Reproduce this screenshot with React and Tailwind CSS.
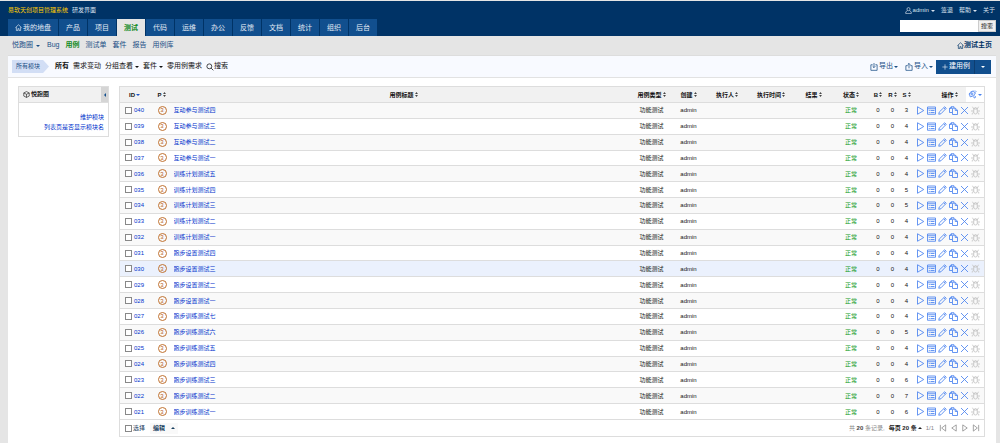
import React, { useState } from 'react';

const navItems = ['产品', '项目', '测试', '代码', '运维', '办公', '反馈', '文档', '统计', '组织', '后台'];
const subItems = ['Bug', '用例', '测试单', '套件', '报告', '用例库'];

const cases = [
    { id: '040', title: '互动参与测试四', steps: 3 },
    { id: '039', title: '互动参与测试三', steps: 4 },
    { id: '038', title: '互动参与测试二', steps: 4 },
    { id: '037', title: '互动参与测试一', steps: 4 },
    { id: '036', title: '训练计划测试五', steps: 4 },
    { id: '035', title: '训练计划测试四', steps: 5 },
    { id: '034', title: '训练计划测试三', steps: 5 },
    { id: '033', title: '训练计划测试二', steps: 4 },
    { id: '032', title: '训练计划测试一', steps: 4 },
    { id: '031', title: '跑步设置测试四', steps: 4 },
    { id: '030', title: '跑步设置测试三', steps: 4, active: true },
    { id: '029', title: '跑步设置测试二', steps: 4 },
    { id: '028', title: '跑步设置测试一', steps: 4 },
    { id: '027', title: '跑步训练测试七', steps: 4 },
    { id: '026', title: '跑步训练测试六', steps: 5 },
    { id: '025', title: '跑步训练测试五', steps: 4 },
    { id: '024', title: '跑步训练测试四', steps: 4 },
    { id: '023', title: '跑步训练测试三', steps: 6 },
    { id: '022', title: '跑步训练测试二', steps: 7 },
    { id: '021', title: '跑步训练测试一', steps: 6 },
];

const Icon = ({ children, className = 'size-[9px]' }) => (
    <svg
        viewBox="0 0 18 18"
        className={`${className} shrink-0`}
        fill="none"
        stroke="currentColor"
        strokeWidth="1.7"
        aria-hidden="true"
    >
        {children}
    </svg>
);

const HomeIcon = () => (
    <Icon className="size-[7px]">
        <path d="M1 9.5 9 2l8 7.5M3.5 8v9h4v-5h3v5h4V8" />
    </Icon>
);

const Caret = ({ up = false }) => (
    <svg viewBox="0 0 8 4" className="w-1 h-[2px] shrink-0" fill="currentColor" aria-hidden="true">
        <path d={up ? 'M0 4 4 0l4 4z' : 'M0 0h8L4 4z'} />
    </svg>
);

const SortIcon = () => (
    <svg viewBox="0 0 8 14" className="w-[3px] h-[5px] shrink-0 text-[#444]" fill="currentColor" aria-hidden="true">
        <path d="M0 5.500 4 0l4 5.500zM0 8.500h8L4 14z" />
    </svg>
);

const actions = [
    { label: '执行', icon: <path d="M3 1.5v15L15.5 9z" /> },
    { label: '结果', icon: <path d="M1 2h16v14.5H1zM1 5.5h16M3.5 9h2M7 9h8M3.5 13h2M7 13h8" /> },
    { label: '编辑', icon: <path d="m1.500 16.500 1-4.500L13.500 1.500l3 3L6 15.500zM11.500 3.500l3 3" /> },
    { label: '复制', icon: <path d="M6 13H1V4.500L4.500 1.500H10V4M1 5h4V1.500M7 4.500h6l4 4v8.500H7zM12.500 4.500V9H17" /> },
    { label: '删除', icon: <path d="m2 2 14 14M16 2 2 16" /> },
    {
        label: '提Bug',
        disabled: true,
        icon: <path d="M5.500 6h7v6.500a3.500 3.500 0 0 1-7 0zM5.500 6 3 1.500M12.500 6 15 1.500M6.500 6a2.500 3 0 0 1 5 0M5.500 10H0M12.500 10H18M5.500 13l-3 1.500V17M12.500 13l3 1.500V17" />,
    },
];

const HeadCell = ({ children, align = 'justify-center', colSpan }) => (
    <th colSpan={colSpan} className="p-0 font-bold">
        <button className={`flex w-full items-center gap-px whitespace-nowrap ${align}`}>
            {children}
            <SortIcon />
        </button>
    </th>
);

const Checkbox = ({ label, checked, onChange, id }) => (
    <input
        type="checkbox"
        id={id}
        aria-label={label}
        checked={checked}
        onChange={onChange}
        className="size-[7px] shrink-0 appearance-none border border-[#888] bg-white checked:bg-[#1a53c8]"
    />
);

const Header = () => (
    <header className="flex justify-between border-t border-[#e5e5e5] bg-[#003366] pl-2 text-white">
        <div>
            <div className="flex h-[18px] items-center gap-1 text-[6px]">
                <span className="text-[#ffcc00]">易软天创项目管理系统</span>
                <span className="text-[#d8e2ee]">研发界面</span>
            </div>
            <nav className="flex gap-px text-[7px] leading-[17px] whitespace-nowrap">
                <a href="#my" className="flex items-center gap-px bg-[#114f8e] px-[7px] text-[#e2ebf5]">
                    <HomeIcon />
                    我的地盘
                </a>
                {navItems.map((item) => (
                    <a
                        key={item}
                        href={`#${item}`}
                        className={
                            item === '测试'
                                ? 'bg-[#e5e5e5] px-[7px] font-bold text-[#118a1c]'
                                : 'bg-[#114f8e] px-[7px] text-[#e2ebf5]'
                        }
                    >
                        {item}
                    </a>
                ))}
            </nav>
        </div>
        <div className="flex flex-col items-end">
            <div className="flex h-[19px] items-center gap-[6px] pr-[5px] text-[6px] text-[#d8e2ee]">
                <button className="flex items-center gap-px">
                    <Icon className="size-[7px]">
                        <circle cx="9" cy="5.500" r="4" />
                        <path d="M6.500 9 2 12.500V17h14v-4.500L11.500 9" />
                    </Icon>
                    <span className="mr-px">admin</span>
                    <Caret />
                </button>
                <a href="#logout">签退</a>
                <button className="flex items-center gap-[2px]">
                    帮助
                    <Caret />
                </button>
                <a href="#about">关于</a>
            </div>
            <form className="mr-1 flex h-3" onSubmit={(e) => e.preventDefault()}>
                <input type="text" aria-label="搜索内容" className="w-[78px] bg-white px-1 text-[6px] text-black outline-none" />
                <button className="w-[18px] border border-[#ccc] bg-[#efefef] text-[6px] leading-[10px] text-[#222]">搜索</button>
            </form>
        </div>
    </header>
);

const SubNav = () => (
    <div className="flex h-[19px] items-center justify-between pr-2 pl-3 text-[7px] text-[#1a4f85]">
        <nav className="flex items-center gap-[6px] whitespace-nowrap">
            <button className="mr-px flex items-center gap-[3px]">
                悦跑圈
                <Caret />
            </button>
            {subItems.map((item) => (
                <a key={item} href={`#${item}`} className={item === '用例' ? 'font-bold text-[#118a1c]' : ''}>
                    {item}
                </a>
            ))}
        </nav>
        <a href="#qa" className="flex items-center font-bold text-[#003366]">
            <HomeIcon />
            测试主页
        </a>
    </div>
);

const Toolbar = () => (
    <div className="flex h-[22px] items-center justify-between border-b border-[#e2e2e2] bg-[#f8faff] pr-[5px] pl-1 text-[7px] text-[#111]">
        <div className="flex items-center gap-1 whitespace-nowrap">
            <a
                href="#all"
                className="flex h-[13px] w-[37px] items-center bg-[#d2def5] pl-1 text-[6px] text-[#1a4f85] [clip-path:polygon(0_0,84%_0,100%_50%,84%_100%,0_100%)]"
            >
                所有模块
            </a>
            <a href="#total" className="ml-[2px] font-bold">所有</a>
            <a href="#changed">需求变动</a>
            <button className="flex items-center gap-[2px]">
                分组查看
                <Caret />
            </button>
            <button className="flex items-center gap-[2px]">
                套件
                <Caret />
            </button>
            <a href="#zero">零用例需求</a>
            <button className="flex items-center">
                <Icon className="size-[8px]">
                    <circle cx="7.500" cy="7.500" r="5.500" />
                    <path d="m11.500 11.500 5 5" />
                </Icon>
                搜索
            </button>
        </div>
        <div className="flex items-center gap-[3px] whitespace-nowrap text-[#1a4f85]">
            <button className="mr-1 flex items-center gap-px">
                <Icon className="size-[8px]">
                    <path d="M6 4H2v12.500h14V4h-4M9 0v10M6 7.500l3 3 3-3" />
                </Icon>
                导出
                <Caret />
            </button>
            <button className="flex items-center gap-px">
                <Icon className="size-[8px]">
                    <path d="M6 6H2v10.500h14V6h-4M9 12V1M6 4l3-3 3 3" />
                </Icon>
                导入
                <Caret />
            </button>
            <div className="flex h-[14px] bg-[#114f8e] text-white">
                <button className="flex items-center gap-px border-r border-[#0d3d70] pr-1 pl-[6px]">
                    <Icon className="size-[6px]">
                        <path d="M9 1v16M1 9h16" />
                    </Icon>
                    建用例
                </button>
                <button aria-label="更多" className="flex w-4 items-center justify-center">
                    <Caret />
                </button>
            </div>
        </div>
    </div>
);

const Sidebar = () => (
    <aside className="w-[91px] shrink-0 self-start border border-[#ddd] bg-white text-[6px]">
        <div className="flex h-[15px] items-center justify-between bg-[#f1f1f1] pl-1 text-[#222]">
            <div className="flex items-center gap-px font-bold">
                <Icon className="size-[7px]">
                    <path d="M9 1.500 16 5v8l-7 3.500L2 13V5zM2 5l7 3.500L16 5M9 8.500v8" />
                </Icon>
                悦跑圈
            </div>
            <button aria-label="收起" className="flex h-full w-[7px] items-center justify-center bg-[#d5d5d5] text-[#114f8e]">
                <svg viewBox="0 0 4 8" className="h-[4px] w-[2px]" fill="currentColor" aria-hidden="true">
                    <path d="M4 0v8L0 4z" />
                </svg>
            </button>
        </div>
        <div className="flex flex-col items-end border-t border-[#ddd] pt-[9px] pr-1 pb-1 leading-[10px] text-[#0033cc]">
            <a href="#modules">维护模块</a>
            <a href="#show">列表页是否显示模块名</a>
        </div>
    </aside>
);

const CaseTable = ({ selected, onToggle }) => (
    <table className="h-full w-full table-fixed border-collapse border border-[#ddd] text-left text-[6px] leading-[10px] text-[#111]">
        <colgroup>
            <col className="w-[34px]" />
            <col className="w-[20px]" />
            <col />
            <col className="w-[36px]" />
            <col className="w-[38px]" />
            <col className="w-[39px]" />
            <col className="w-[49px]" />
            <col className="w-[36px]" />
            <col className="w-[39px]" />
            <col className="w-[15px]" />
            <col className="w-[14px]" />
            <col className="w-[14px]" />
            <col className="w-[52px]" />
            <col className="w-[19px]" />
        </colgroup>
        <thead>
            <tr className="h-4 bg-[#f1f1f1]">
                <th className="p-0 pl-[9px] font-bold">
                    <button className="flex items-center gap-px">
                        ID
                        <span className="flex text-[#1a53c8]"><Caret /></span>
                    </button>
                </th>
                <HeadCell align="justify-start pl-1">P</HeadCell>
                <HeadCell>用例标题</HeadCell>
                <HeadCell>用例类型</HeadCell>
                <HeadCell>创建</HeadCell>
                <HeadCell>执行人</HeadCell>
                <HeadCell>执行时间</HeadCell>
                <HeadCell>结果</HeadCell>
                <HeadCell>状态</HeadCell>
                <HeadCell>B</HeadCell>
                <HeadCell>R</HeadCell>
                <HeadCell>S</HeadCell>
                <HeadCell align="justify-end pr-2">操作</HeadCell>
                <th className="bg-white p-0">
                    <button aria-label="自定义" className="flex w-full items-center justify-center gap-px text-[#4a83f0]">
                        <Icon className="size-[9px]">
                            <path d="m6 3 2 1 1-2 3 .5.500 2.500 2 1-1 2.500L12 10l-1 2.500L8 12l-2 2-2.500-1.500.5-2.500-2-1.500 1.500-2.500L6 6z" />
                            <circle cx="8" cy="8" r="2" />
                            <path d="M14 1l2 2-1 2M13 12l2 1-1 3-3-1" />
                        </Icon>
                        <Caret />
                    </button>
                </th>
            </tr>
        </thead>
        <tbody>
            {cases.map((item) => (
                <tr
                    key={item.id}
                    className={`border-t border-[#ddd] ${item.active ? 'bg-[#ebf1fd]' : 'odd:bg-[#f9f9f9] even:bg-white'}`}
                >
                    <td className="p-0 pl-[5px]">
                        <div className="flex items-center gap-[2px] text-[#0033cc]">
                            <Checkbox
                                label={`选择 ${item.id}`}
                                checked={selected.includes(item.id)}
                                onChange={() => onToggle(item.id)}
                            />
                            <a href={`#case-${item.id}`}>{item.id}</a>
                        </div>
                    </td>
                    <td className="p-0 pl-1">
                        <span className="flex size-[9px] items-center justify-center rounded-full border border-[#c0712f] text-[6px] leading-none text-[#b8621b]">
                            3
                        </span>
                    </td>
                    <td className="truncate p-0 text-[#0033cc]">
                        <a href={`#case-${item.id}`}>{item.title}</a>
                    </td>
                    <td className="p-0 text-center whitespace-nowrap">功能测试</td>
                    <td className="p-0 text-center">admin</td>
                    <td className="p-0"></td>
                    <td className="p-0"></td>
                    <td className="p-0"></td>
                    <td className="p-0 text-center text-[#119a1c]">正常</td>
                    <td className="p-0 text-center">0</td>
                    <td className="p-0 text-center">0</td>
                    <td className="p-0 text-center">{item.steps}</td>
                    <td colSpan={2} className="p-0">
                        <div className="flex gap-[2px] pl-[2px]">
                            {actions.map((action) => (
                                <button
                                    key={action.label}
                                    aria-label={action.label}
                                    disabled={action.disabled}
                                    className="text-[#4a83f0] disabled:text-[#c4c4c4]"
                                >
                                    <Icon>{action.icon}</Icon>
                                </button>
                            ))}
                        </div>
                    </td>
                </tr>
            ))}
        </tbody>
    </table>
);

const TableFooter = ({ allSelected, onToggleAll }) => (
    <div className="flex h-[17px] shrink-0 items-center justify-between border border-t-0 border-[#ddd] pr-1 pl-[5px] text-[6px] text-[#888]">
        <div className="flex items-center gap-[5px] text-[#1a4060]">
            <div className="flex items-center gap-px">
                <Checkbox id="select-all" checked={allSelected} onChange={onToggleAll} />
                <label htmlFor="select-all">选择</label>
            </div>
            <button className="flex h-[11px] items-center gap-[6px] bg-[#f9f9f9] px-[3px] font-bold">
                编辑
                <Caret up />
            </button>
        </div>
        <div className="flex items-center gap-1">
            <span>
                共 <strong className="text-[#444]">20</strong> 条记录,
            </span>
            <button className="flex items-center gap-px font-bold text-[#222]">
                每页 20 条
                <Caret up />
            </button>
            <span>1/1</span>
            <div className="flex gap-[3px] pl-px">
                <button aria-label="首页">
                    <Icon className="size-[8px]"><path d="M3 2v14M15 2v14L6 9z" /></Icon>
                </button>
                <button aria-label="上一页">
                    <Icon className="size-[8px]"><path d="M14 2v14L4 9z" /></Icon>
                </button>
                <button aria-label="下一页">
                    <Icon className="size-[8px]"><path d="M4 2v14l10-7z" /></Icon>
                </button>
                <button aria-label="末页">
                    <Icon className="size-[8px]"><path d="M15 2v14M3 2v14l9-7z" /></Icon>
                </button>
            </div>
        </div>
    </div>
);

const App = () => {
    const [selected, setSelected] = useState([]);

    const handleToggle = (id) => {
        setSelected(selected.includes(id) ? selected.filter((item) => item !== id) : [...selected, id]);
    };

    const allSelected = selected.length === cases.length;

    const handleToggleAll = () => {
        setSelected(allSelected ? [] : cases.map((item) => item.id));
    };

    return (
        <div className="flex h-screen flex-col bg-[#e5e5e5] font-['Liberation_Sans','Noto_Sans_CJK_SC',sans-serif]">
            <Header />
            <SubNav />
            <main className="mr-1 ml-2 flex flex-1 flex-col border-t border-[#ddd] bg-white">
                <Toolbar />
                <div className="flex min-h-0 flex-1 gap-[10px] pt-2 pr-[11px] pb-[6px] pl-[10px]">
                    <Sidebar />
                    <section className="flex min-w-0 flex-1 flex-col">
                        <div className="min-h-0 flex-1">
                            <CaseTable selected={selected} onToggle={handleToggle} />
                        </div>
                        <TableFooter allSelected={allSelected} onToggleAll={handleToggleAll} />
                    </section>
                </div>
            </main>
        </div>
    );
};

export default App;
